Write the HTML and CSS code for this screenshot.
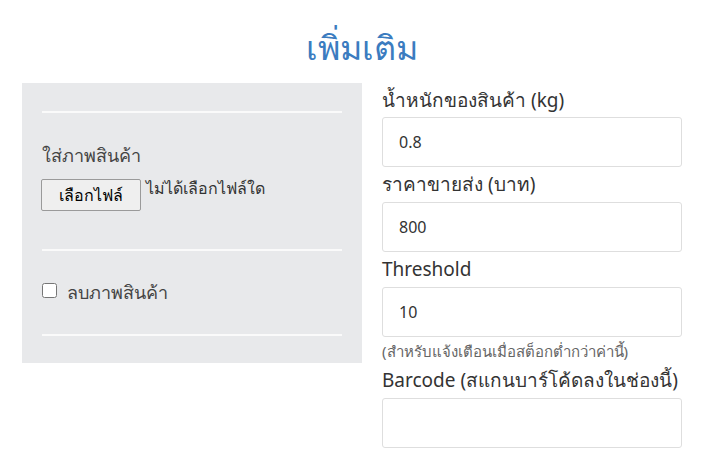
FILE: index.html
```html
<!DOCTYPE html>
<html lang="th">
  <head>
    <meta charset="UTF-8" />
    <meta name="viewport" content="width=device-width, initial-scale=1.0" />
    <title>เพิ่มเติม</title>
    <link rel="stylesheet" href="styles.css">
  </head>
  <body>
    <div class="container">
      <h2 class="title">เพิ่มเติม</h2>

      <div class="row">
        <div class="photo-box">
          <hr />
          <div class="photo-upload">
            <label class="photo-label">ใส่ภาพสินค้า</label>
            <div class="file-input">
              <button type="button" class="file-btn">เลือกไฟล์</button>
              <span class="file-name">ไม่ได้เลือกไฟล์ใด</span>
            </div>
          </div>
          <hr />
          <label class="remove-photo">
            <input type="checkbox" />
            <span>ลบภาพสินค้า</span>
          </label>
          <hr />
        </div>
        <!-- .photo-box -->

        <div class="fields">
          <div class="field">
            <label>น้ำหนักของสินค้า (kg)</label>
            <input type="text" value="0.8" />
          </div>
          <div class="field">
            <label>ราคาขายส่ง (บาท)</label>
            <input type="text" value="800" />
          </div>
          <div class="field">
            <label>Threshold</label>
            <input type="text" value="10" />
            <small class="help">(สำหรับแจ้งเตือนเมื่อสต็อกต่ำกว่าค่านี้)</small>
          </div>
          <div class="field">
            <label>Barcode (สแกนบาร์โค้ดลงในช่องนี้)</label>
            <input type="text" value="" />
          </div>
        </div>
        <!-- .fields -->
      </div>
    </div>
  </body>
</html>
```

FILE: styles.css
```css
*,
*::before,
*::after {
  box-sizing: border-box;
  margin: 0;
  padding: 0;
}

body {
  background-color: #fff;
  color: #333;
  font-family: 'Noto Sans', sans-serif;
  font-size: 16px;
}

.container {
  width: 680px;
  margin-left: 22px;
}

.title {
  height: 83px;
  padding-top: 27px;
  text-align: center;
  color: #3b7cc0;
  font-size: 34px;
  font-weight: normal;
  line-height: 40px;
}

.row {
  display: flex;
  gap: 20px;
  align-items: flex-start;
}

.photo-box {
  width: 340px;
  padding: 28px 20px 27px;
  background-color: #e8e9eb;
}

.photo-box hr {
  border: 0;
  border-top: 2px solid #fafafa;
}

.photo-upload {
  padding: 30px 0 38px;
}

.photo-label {
  display: block;
  font-size: 18px;
  line-height: 24px;
  color: #444;
  margin-bottom: 12px;
}

.file-input {
  display: flex;
  align-items: center;
}

.file-btn {
  width: 100px;
  height: 32px;
  margin-left: -1px;
  margin-right: 5px;
  font-family: 'Noto Sans', sans-serif;
  font-size: 16px;
  color: #000;
  background-color: #efefef;
  border: 1px solid #9a9a9a;
  border-radius: 2px;
}

.file-name {
  font-size: 16px;
  color: #333;
  margin-top: -14px;
}

.remove-photo {
  display: flex;
  align-items: center;
  gap: 10px;
  height: 83px;
  font-size: 18px;
  color: #444;
}

.remove-photo input {
  width: 15px;
  height: 15px;
  margin-top: -4px;
}

.fields {
  width: 300px;
}

.field label {
  display: block;
  font-size: 19px;
  line-height: 34px;
  color: #333;
}

.field input {
  display: block;
  width: 100%;
  height: 50px;
  padding: 0 16px;
  border: 1px solid #dedede;
  border-radius: 3px;
  font-family: 'Noto Sans', sans-serif;
  font-size: 16px;
  color: #333;
}

.field + .field label {
  line-height: 35px;
}

.help {
  display: block;
  margin: 4px 0 2px;
  font-size: 15px;
  color: #666;
  line-height: 20px;
}
```
